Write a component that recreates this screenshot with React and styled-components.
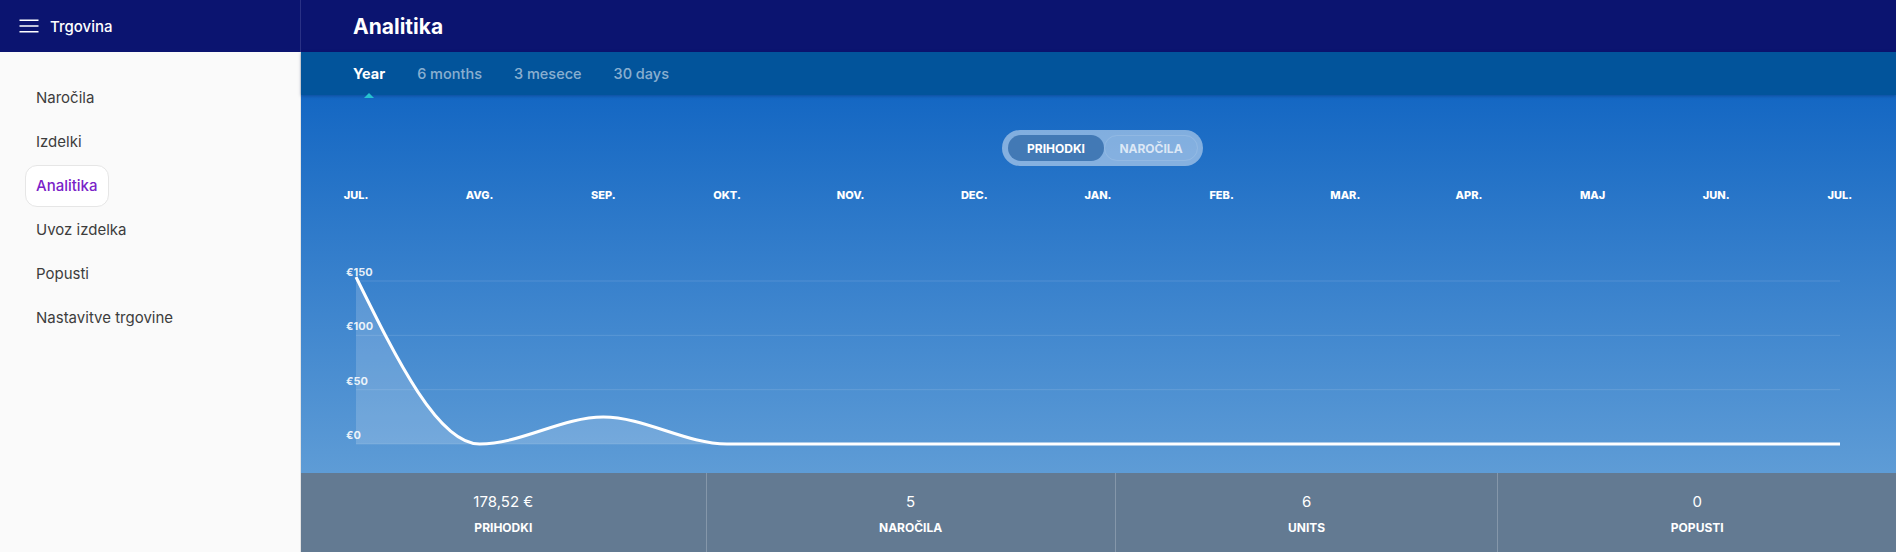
import React from 'react'
import styled, { createGlobalStyle } from 'styled-components'

const GlobalStyle = createGlobalStyle`
  html, body {
    margin: 0;
    padding: 0;
    background: #fafafa;
  }
  body {
    font-family: Inter, "Noto Sans", "Liberation Sans", sans-serif;
    -webkit-font-smoothing: antialiased;
  }
  * { box-sizing: border-box; }
`

const NAVY = '#0b1470'

const Shell = styled.div`
  display: flex;
  width: 1896px;
  height: 552px;
  overflow: hidden;
`

const Sidebar = styled.aside`
  width: 301px;
  flex: none;
  display: flex;
  flex-direction: column;
`

const SideHeader = styled.div`
  height: 52px;
  background: ${NAVY};
  border-right: 1px solid #2a3185;
  display: flex;
  align-items: center;
  gap: 11px;
  padding-left: 19px;
  color: #fff;
  font-size: 15px;
  font-weight: 500;
`

const Nav = styled.nav`
  flex: 1;
  background: #fafafa;
  border-right: 1px solid #e4e4e4;
  padding: 25px 25px 0;
  display: flex;
  flex-direction: column;
  align-items: flex-start;
  gap: 2px;
`

const NavItem = styled.a`
  height: 42px;
  line-height: 40px;
  padding: 0 10px;
  font-size: 15px;
  border-radius: 12px;
  border: 1px solid ${p => (p.$active ? '#e6e6e6' : 'transparent')};
  background: ${p => (p.$active ? '#fff' : 'transparent')};
  color: ${p => (p.$active ? '#7a22c8' : '#3d3d3d')};
  font-weight: ${p => (p.$active ? 500 : 400)};
  cursor: pointer;
`

const Main = styled.main`
  flex: 1;
  display: flex;
  flex-direction: column;
  min-width: 0;
`

const TopBar = styled.header`
  height: 52px;
  background: ${NAVY};
  display: flex;
  align-items: center;
  padding-left: 52px;
  color: #fff;
  font-size: 21px;
  font-weight: 700;
`

const TabBar = styled.div`
  height: 43px;
  background: #02549b;
  display: flex;
  align-items: center;
  gap: 32px;
  padding-left: 52px;
  box-shadow: 0 1px 3px rgba(0, 30, 80, 0.35);
  position: relative;
  z-index: 1;
`

const Tab = styled.span`
  position: relative;
  font-size: 14.5px;
  font-weight: ${p => (p.$active ? 700 : 500)};
  color: ${p => (p.$active ? '#fff' : 'rgba(255,255,255,0.55)')};
  cursor: pointer;

  &::after {
    content: '';
    display: ${p => (p.$active ? 'block' : 'none')};
    position: absolute;
    left: 50%;
    bottom: -16px;
    margin-left: -5px;
    border-left: 5px solid transparent;
    border-right: 5px solid transparent;
    border-bottom: 5px solid #26c2cf;
  }
`

const ChartSection = styled.section`
  flex: 1;
  background: linear-gradient(180deg, #1467c3 0%, #5e9cd6 100%);
  display: flex;
  flex-direction: column;
  align-items: center;
  padding-top: 35px;
`

const Toggle = styled.div`
  display: flex;
  align-items: center;
  height: 36px;
  padding: 0 5px 0 6px;
  border-radius: 18px;
  background: rgba(255, 255, 255, 0.45);
  margin-left: 8px;
`

const ToggleButton = styled.span`
  height: 26px;
  line-height: 26px;
  width: ${p => (p.$active ? '96px' : '94px')};
  text-align: center;
  border-radius: 13px;
  font-size: 12px;
  font-weight: 700;
  color: ${p => (p.$active ? '#fff' : 'rgba(255,255,255,0.72)')};
  background: ${p => (p.$active ? '#4279b5' : 'transparent')};
  border: 1px solid ${p => (p.$active ? 'transparent' : 'rgba(255,255,255,0.12)')};
  cursor: pointer;
`

const Months = styled.div`
  align-self: stretch;
  display: flex;
  justify-content: space-between;
  padding: 0 56px 0 55px;
  margin-top: 22px;
  height: 14px;
`

const Month = styled.span`
  width: 0;
  display: flex;
  justify-content: center;
  white-space: nowrap;
  color: #fff;
  font-size: 11px;
  font-weight: 800;
  line-height: 14px;
`

const Plot = styled.svg`
  display: block;
  align-self: stretch;
  margin-top: 38px;
  overflow: visible;
`

const Stats = styled.div`
  height: 79px;
  background: #637a92;
  display: flex;
`

const Stat = styled.div`
  flex: 1 1 auto;
  padding: 20px 12px 0;
  text-align: center;
  color: #fff;
  & + & {
    border-left: 1px solid rgba(255, 255, 255, 0.22);
  }
`

const StatValue = styled.div`
  font-size: 15px;
  line-height: 18px;
`

const StatLabel = styled.div`
  margin-top: 10px;
  font-size: 12px;
  line-height: 14px;
  font-weight: 700;
`

const navItems = ['Naročila', 'Izdelki', 'Analitika', 'Uvoz izdelka', 'Popusti', 'Nastavitve trgovine']
const tabs = ['Year', '6 months', '3 mesece', '30 days']
const months = ['JUL.', 'AVG.', 'SEP.', 'OKT.', 'NOV.', 'DEC.', 'JAN.', 'FEB.', 'MAR.', 'APR.', 'MAJ', 'JUN.', 'JUL.']
const revenue = [153.72, 0, 24.8, 0, 0, 0, 0, 0, 0, 0, 0, 0, 0]
const stats = [
  { value: '178,52 €', label: 'PRIHODKI' },
  { value: '5', label: 'NAROČILA' },
  { value: '6', label: 'UNITS' },
  { value: '0', label: 'POPUSTI' }
]

// plot geometry (svg is the full width of the main column)
const PLOT_W = 1595
const PLOT_H = 233
const X0 = 55
const STEP = 1484 / 12
const Y0 = 204
const UNIT = 54.33 / 50

const sign = v => (v < 0 ? -1 : v > 0 ? 1 : 0)

// monotone-x cubic, same idea as d3.curveMonotoneX
function monotonePath(pts) {
  const n = pts.length
  const t = new Array(n).fill(0)
  for (let i = 1; i < n - 1; i++) {
    const h0 = pts[i][0] - pts[i - 1][0]
    const h1 = pts[i + 1][0] - pts[i][0]
    const s0 = (pts[i][1] - pts[i - 1][1]) / h0
    const s1 = (pts[i + 1][1] - pts[i][1]) / h1
    const p = (s0 * h1 + s1 * h0) / (h0 + h1)
    t[i] = (sign(s0) + sign(s1)) * Math.min(Math.abs(s0), Math.abs(s1), 0.5 * Math.abs(p)) || 0
  }
  const hs = pts[1][0] - pts[0][0]
  t[0] = (3 * (pts[1][1] - pts[0][1]) / hs - t[1]) / 2
  const he = pts[n - 1][0] - pts[n - 2][0]
  t[n - 1] = (3 * (pts[n - 1][1] - pts[n - 2][1]) / he - t[n - 2]) / 2

  let d = `M${pts[0][0]},${pts[0][1]}`
  for (let i = 0; i < n - 1; i++) {
    const dx = (pts[i + 1][0] - pts[i][0]) / 3
    d += ` C${pts[i][0] + dx},${pts[i][1] + dx * t[i]} ${pts[i + 1][0] - dx},${pts[i + 1][1] - dx * t[i + 1]} ${pts[i + 1][0]},${pts[i + 1][1]}`
  }
  return d
}

const MenuIcon = () => (
  <svg width="20" height="14" viewBox="0 0 20 14" fill="none">
    <path d="M0.5 1.2H19.5M0.5 7H19.5M0.5 12.8H19.5" stroke="#fff" strokeWidth="1.6" />
  </svg>
)

const RevenueChart = () => {
  const pts = revenue.map((v, i) => [X0 + i * STEP, Y0 - v * UNIT])
  const line = monotonePath(pts)
  const xEnd = X0 + 12 * STEP
  const area = `${line} L${xEnd},${Y0} L${X0},${Y0} Z`

  return (
    <Plot width={PLOT_W} height={PLOT_H} viewBox={`0 0 ${PLOT_W} ${PLOT_H}`}>
      {[0, 50, 100, 150].map(v => {
        const y = Y0 - v * UNIT
        return (
          <g key={v}>
            <line x1={X0} x2={xEnd} y1={y} y2={y} stroke="rgba(255,255,255,0.13)" strokeWidth="1" />
            <text
              x={X0 - 10}
              y={y - 5}
              fill="rgba(255,255,255,0.88)"
              fontSize="11"
              fontWeight="700"
              fontFamily="Inter, sans-serif"
            >
              €{v}
            </text>
          </g>
        )
      })}
      <path d={area} fill="rgba(255,255,255,0.17)" />
      <path d={line} fill="none" stroke="#fff" strokeWidth="3" strokeLinejoin="round" />
    </Plot>
  )
}

export default function App() {
  return (
    <Shell>
      <GlobalStyle />
      <Sidebar>
        <SideHeader>
          <MenuIcon />
          Trgovina
        </SideHeader>
        <Nav>
          {navItems.map(item => (
            <NavItem key={item} $active={item === 'Analitika'}>
              {item}
            </NavItem>
          ))}
        </Nav>
      </Sidebar>
      <Main>
        <TopBar>Analitika</TopBar>
        <TabBar>
          {tabs.map(tab => (
            <Tab key={tab} $active={tab === 'Year'}>
              {tab}
            </Tab>
          ))}
        </TabBar>
        <ChartSection>
          <Toggle>
            <ToggleButton $active>PRIHODKI</ToggleButton>
            <ToggleButton>NAROČILA</ToggleButton>
          </Toggle>
          <Months>
            {months.map((m, i) => (
              <Month key={i}>{m}</Month>
            ))}
          </Months>
          <RevenueChart />
        </ChartSection>
        <Stats>
          {stats.map(s => (
            <Stat key={s.label}>
              <StatValue>{s.value}</StatValue>
              <StatLabel>{s.label}</StatLabel>
            </Stat>
          ))}
        </Stats>
      </Main>
    </Shell>
  )
}
